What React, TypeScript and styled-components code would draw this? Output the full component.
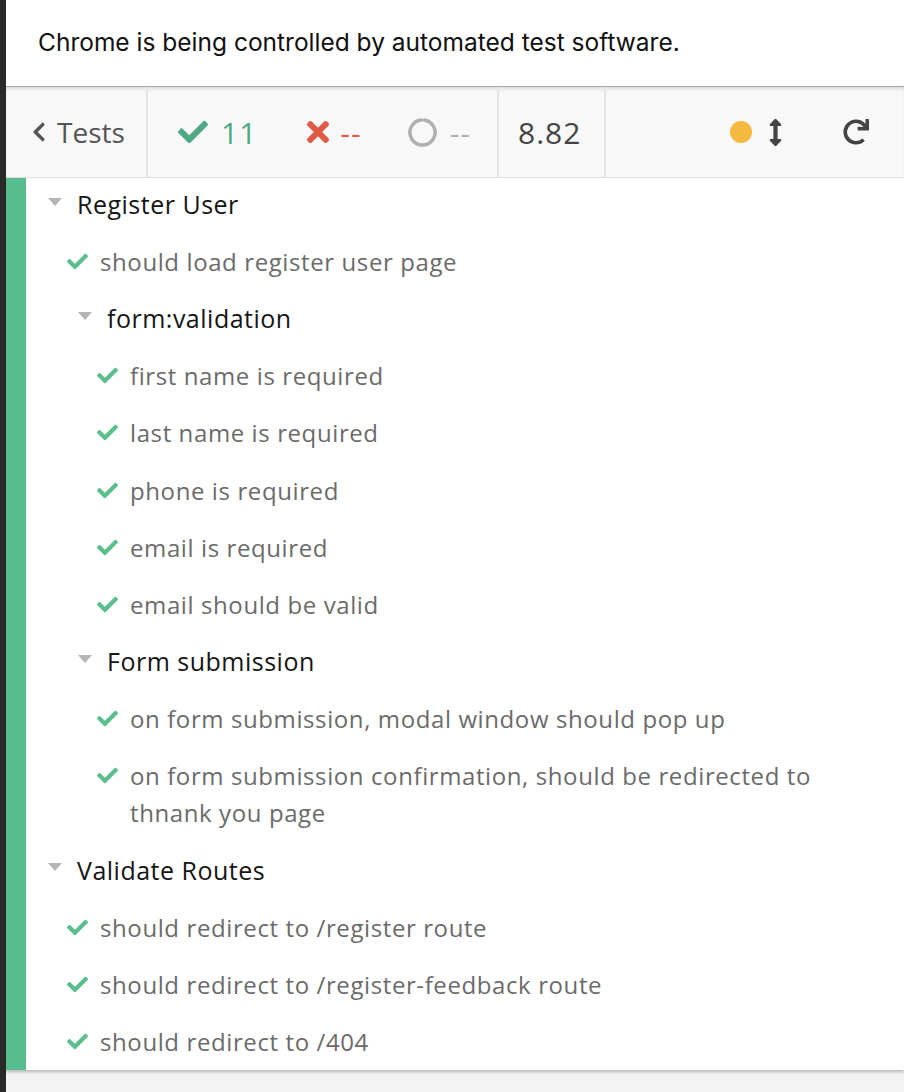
import React from "react";
import styled, { createGlobalStyle } from "styled-components";
import { FaCheck, FaTimes, FaRedo, FaArrowsAltV, FaChevronLeft } from "react-icons/fa";

const GlobalStyle = createGlobalStyle`
  html, body {
    margin: 0;
    padding: 0;
    height: 100%;
  }
  body {
    font-family: "Open Sans", "Lato", sans-serif;
    background: #2b2b2b;
  }
  #root {
    height: 100%;
  }
`;

const PageContainer = styled.div`
  display: flex;
  height: 100vh;
  overflow: hidden;
`;

const DarkStrip = styled.div`
  width: 6px;
  flex-shrink: 0;
  background: #2a2a2a;
`;

const Main = styled.div`
  flex: 1;
  display: flex;
  flex-direction: column;
  min-width: 0;
`;

const Banner = styled.div`
  height: 86px;
  flex-shrink: 0;
  background: #fff;
  display: flex;
  align-items: center;
  padding-left: 32px;
  padding-bottom: 2px;
  box-sizing: border-box;
  font-family: "Inter", "Liberation Sans", sans-serif;
  font-size: 24.5px;
  color: #111;
`;

const Toolbar = styled.div`
  height: 92px;
  flex-shrink: 0;
  display: flex;
  background: #f8f8f8;
  border-top: 1px solid #a8a8a8;
  border-bottom: 1px solid #e2e2e2;
  box-shadow: inset 0 4px 5px -3px rgba(0, 0, 0, 0.18);
  box-sizing: border-box;
`;

const Section = styled.div<{ $width?: number; $grow?: boolean }>`
  display: flex;
  align-items: center;
  box-sizing: border-box;
  ${(p) => (p.$width ? `width: ${p.$width}px;` : "")}
  ${(p) => (p.$grow ? "flex: 1;" : "")}
  border-right: ${(p) => (p.$grow ? "none" : "2px solid #e4e4e4")};
`;

const BackLink = styled.div`
  display: flex;
  align-items: center;
  gap: 11px;
  padding-left: 26px;
  color: #555;
  font-size: 28px;
  svg {
    width: 14px;
    height: 22px;
  }
`;

const Stat = styled.div<{ $color: string; $gap: number }>`
  display: flex;
  align-items: center;
  gap: ${(p) => p.$gap}px;
  color: ${(p) => p.$color};
  font-size: 30px;
  letter-spacing: 1px;
`;

const Stats = styled.div`
  display: flex;
  align-items: center;
  padding-left: 30px;
  gap: 45px;
`;

const Duration = styled.div`
  padding-left: 19px;
  font-size: 30px;
  letter-spacing: 1px;
  color: #444;
`;

const Controls = styled.div`
  display: flex;
  align-items: center;
  margin-left: auto;
  padding-right: 35px;
  color: #444;
`;

const Dot = styled.span`
  width: 22px;
  height: 22px;
  border-radius: 50%;
  background: #f6b940;
  margin-right: 10px;
`;

const ReloadWrap = styled.span`
  margin-left: 54px;
  display: flex;
`;

const Reporter = styled.div`
  flex: 1;
  background: #f3f3f3;
  min-height: 0;
`;

const Panel = styled.div`
  background: #fff;
  border-left: 20px solid #58bd8e;
  box-shadow: 0 2px 3px rgba(0, 0, 0, 0.25);
`;

const SuiteRow = styled.div<{ $depth: number }>`
  display: flex;
  align-items: center;
  padding: 10px 0 10px ${(p) => 22 + p.$depth * 30}px;
  line-height: 37px;
  font-size: 25px;
  letter-spacing: 0.5px;
  color: #151515;
  &:first-child {
    padding-top: 8px;
  }
`;

const Caret = styled.span`
  width: 0;
  height: 0;
  border-left: 7px solid transparent;
  border-right: 7px solid transparent;
  border-top: 8px solid #b5b5b5;
  margin-right: 15px;
  margin-top: -6px;
`;

const TestRow = styled.div<{ $depth: number }>`
  display: flex;
  align-items: flex-start;
  padding: 10px 40px 10.2px ${(p) => 41 + (p.$depth - 1) * 30}px;
  line-height: 37px;
  font-size: 24px;
  letter-spacing: 0.6px;
  color: #6b6b6b;
`;

const CheckMark = styled.span`
  display: flex;
  align-items: center;
  height: 37px;
  width: 21px;
  margin-right: 12px;
  flex-shrink: 0;
  color: #5abf8d;
  svg {
    width: 21px;
    height: 21px;
  }
`;

const Ring = () => (
  <svg width="31" height="31" viewBox="0 0 32 32">
    <path
      d="M17.6 3.1 A13 13 0 1 1 14.4 3.1"
      fill="none"
      stroke="#b0b0b0"
      strokeWidth="3.6"
      strokeLinecap="round"
    />
  </svg>
);

type Node = { kind: "suite" | "test"; title: string; depth: number };

const tree: Node[] = [
  { kind: "suite", title: "Register User", depth: 0 },
  { kind: "test", title: "should load register user page", depth: 1 },
  { kind: "suite", title: "form:validation", depth: 1 },
  { kind: "test", title: "first name is required", depth: 2 },
  { kind: "test", title: "last name is required", depth: 2 },
  { kind: "test", title: "phone is required", depth: 2 },
  { kind: "test", title: "email is required", depth: 2 },
  { kind: "test", title: "email should be valid", depth: 2 },
  { kind: "suite", title: "Form submission", depth: 1 },
  { kind: "test", title: "on form submission, modal window should pop up", depth: 2 },
  {
    kind: "test",
    title: "on form submission confirmation, should be redirected to thnank you page",
    depth: 2,
  },
  { kind: "suite", title: "Validate Routes", depth: 0 },
  { kind: "test", title: "should redirect to /register route", depth: 1 },
  { kind: "test", title: "should redirect to /register-feedback route", depth: 1 },
  { kind: "test", title: "should redirect to /404", depth: 1 },
];

const App: React.FC = () => {
  return (
    <PageContainer>
      <GlobalStyle />
      <DarkStrip />
      <Main>
        <Banner>Chrome is being controlled by automated test software.</Banner>
        <Toolbar>
          <Section $width={142}>
            <BackLink>
              <FaChevronLeft />
              Tests
            </BackLink>
          </Section>
          <Section $width={351}>
            <Stats>
              <Stat $color="#4ea983" $gap={13}>
                <FaCheck size={30} />
                11
              </Stat>
              <Stat $color="#e05a45" $gap={6}>
                <FaTimes size={32} />
                --
              </Stat>
              <Stat $color="#b0b0b0" $gap={12}>
                <Ring />
                --
              </Stat>
            </Stats>
          </Section>
          <Section $width={107}>
            <Duration>8.82</Duration>
          </Section>
          <Section $grow>
            <Controls>
              <Dot />
              <FaArrowsAltV size={27} />
              <ReloadWrap>
                <FaRedo size={26} />
              </ReloadWrap>
            </Controls>
          </Section>
        </Toolbar>
        <Reporter>
          <Panel>
            {tree.map((n, i) =>
              n.kind === "suite" ? (
                <SuiteRow key={i} $depth={n.depth}>
                  <Caret />
                  {n.title}
                </SuiteRow>
              ) : (
                <TestRow key={i} $depth={n.depth}>
                  <CheckMark>
                    <FaCheck />
                  </CheckMark>
                  <span>{n.title}</span>
                </TestRow>
              )
            )}
          </Panel>
        </Reporter>
      </Main>
    </PageContainer>
  );
};

export default App;
